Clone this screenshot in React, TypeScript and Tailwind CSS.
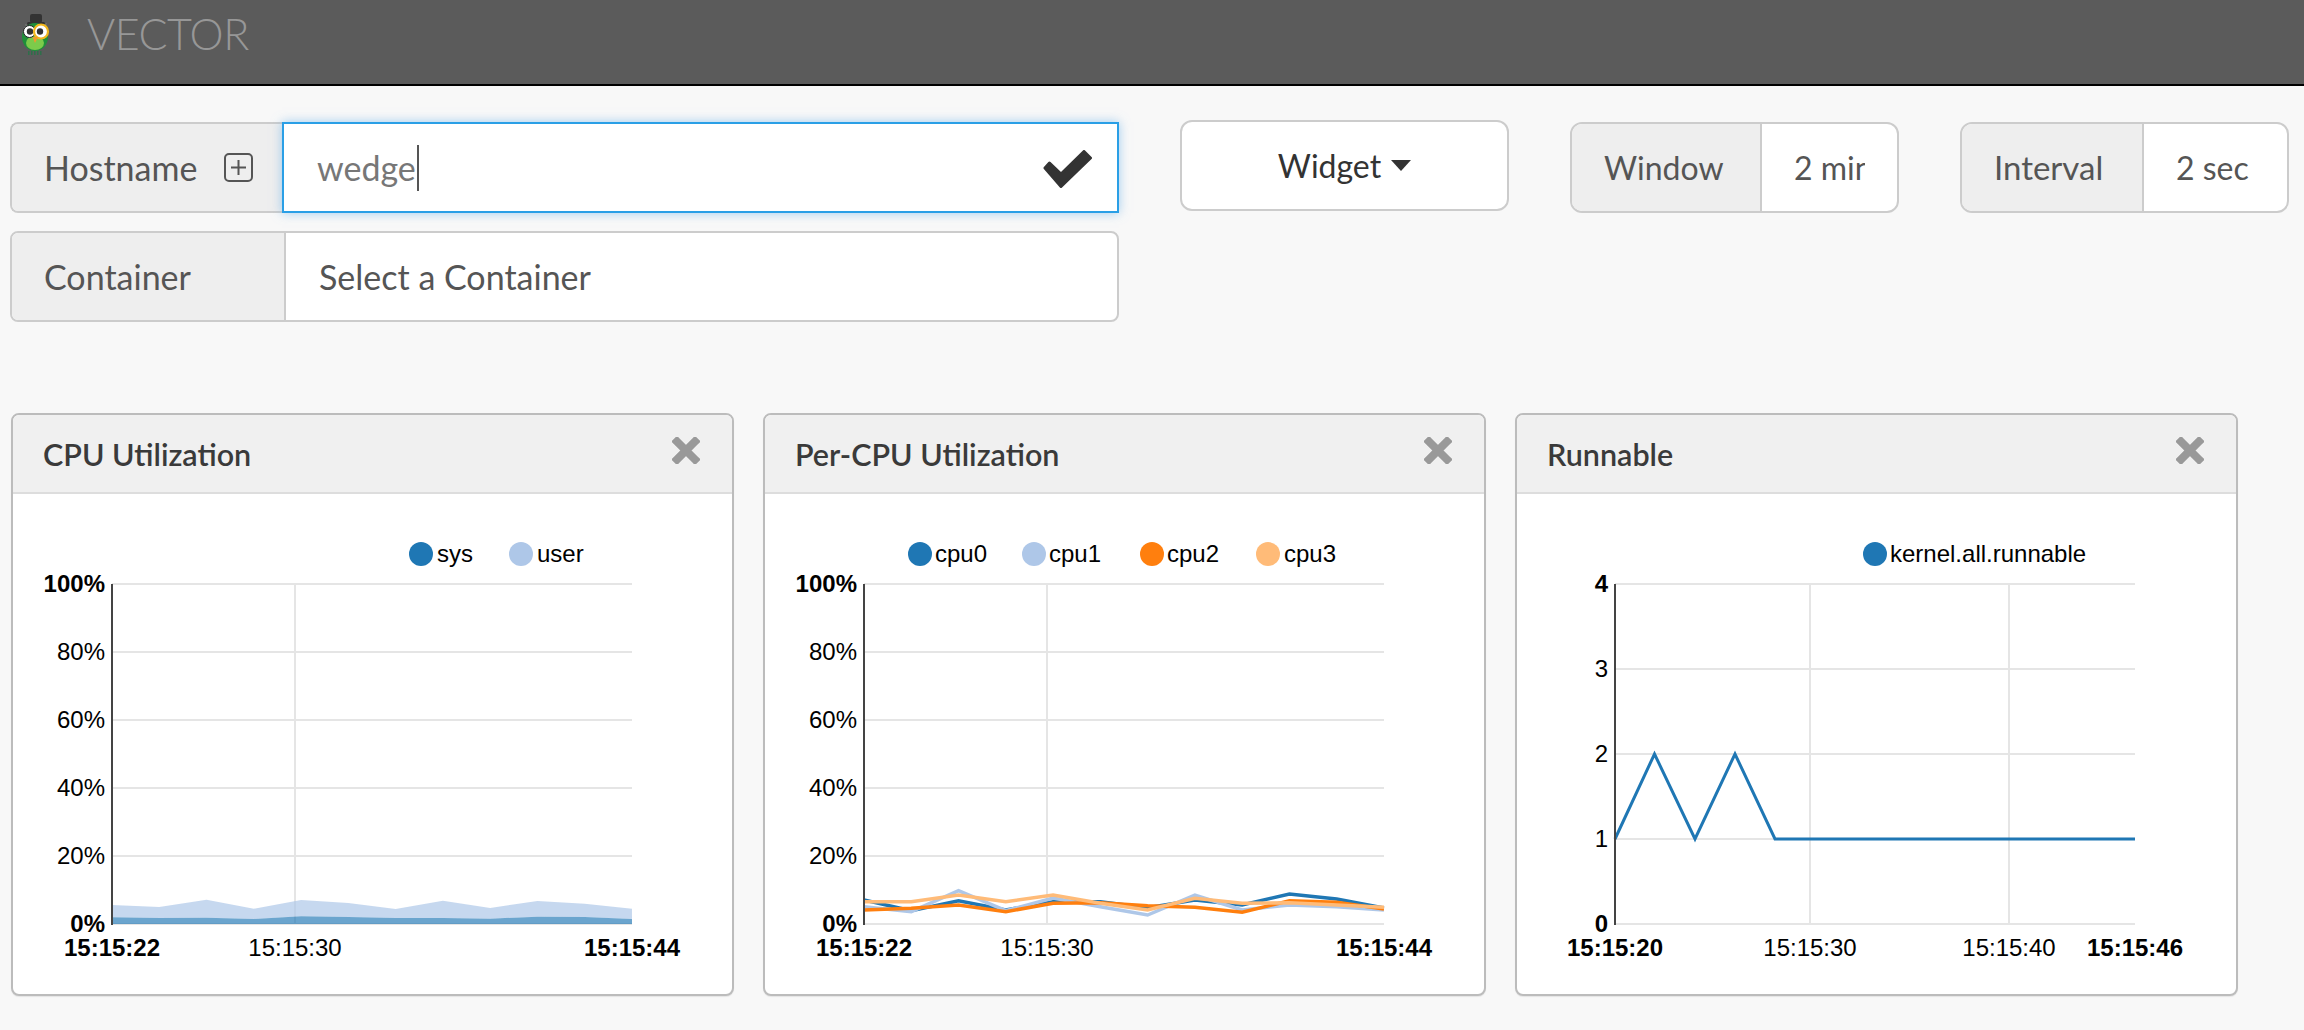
import React from "react";

const sans = "font-['Lato','Noto_Sans',sans-serif]";

function Owl() {
  return (
    <svg width="32" height="42" viewBox="0 0 32 42" className="block">
      <path d="M6 11 L12 13 L22 13 L28 10 L25 17 L8 17 Z" fill="#777" />
      <rect x="11" y="1" width="12" height="9" rx="2" fill="#333" />
      <rect x="8" y="9" width="18" height="3" rx="1.5" fill="#333" />
      <ellipse cx="16" cy="24" rx="13" ry="14" fill="#1f8f3a" />
      <ellipse cx="16" cy="30" rx="9" ry="7" fill="#7ccb4b" />
      <circle cx="10.5" cy="18.5" r="6" fill="#fff" stroke="#222" strokeWidth="1" />
      <circle cx="11" cy="18.5" r="3.2" fill="#333" />
      <circle cx="22" cy="18.5" r="7" fill="#fff" stroke="#f2b61c" strokeWidth="2.2" />
      <circle cx="21" cy="18.5" r="3.2" fill="#333" />
      <path d="M13.5 24 L19 24 L16 30 Z" fill="#f09a2c" />
      <path d="M9 38h1.5v4H9zM12 38h1.5v4H12zM15 38h1.5v4H15zM18 38h1.5v4H18zM21 38h1.5v4H21z" fill="#2f6f4a" />
    </svg>
  );
}

function Label({ children, w, extra = "" }: { children: React.ReactNode; w: string; extra?: string }) {
  return <div className={`flex items-center shrink-0 h-full bg-[#eeeeee] text-[#555555] ${w} ${extra}`}>{children}</div>;
}

function CloseX() {
  return (
    <svg width="28" height="27" viewBox="0 0 28 27" className="block">
      <path d="M5 4.5 L23 22.5 M23 4.5 L5 22.5" stroke="#999999" strokeWidth="8" strokeLinecap="square" />
    </svg>
  );
}

type Pt = [number, number];
const pts = (p: Pt[]) => p.map((q) => q.join(",")).join(" ");

function Axis({
  x0,
  x1,
  ticks,
  ylabels,
  xlabels,
  legend,
  children,
  vbLeft,
}: {
  x0: number;
  x1: number;
  ticks: number[];
  ylabels: { y: number; t: string; b?: boolean }[];
  xlabels: { x: number; t: string; b?: boolean }[];
  legend: { cx: number; tx: number; c: string; t: string }[];
  children: React.ReactNode;
  vbLeft: number;
}) {
  return (
    <svg
      width="718"
      height="499"
      viewBox={`${vbLeft} 494 718 499`}
      className="block"
      fontFamily="'Liberation Sans', Arial, sans-serif"
      fontSize="24"
      fill="#000"
    >
      {legend.map((l) => (
        <g key={l.t}>
          <ellipse cx={l.cx} cy={554} rx={12} ry={12} fill={l.c} />
          <text x={l.tx} y={562}>{l.t}</text>
        </g>
      ))}
      {ylabels.map((l) => (
        <line key={l.y} x1={x0} x2={x1} y1={l.y} y2={l.y} stroke="#e5e5e5" strokeWidth="2" />
      ))}
      {ticks.map((t) => (
        <line key={t} x1={t} x2={t} y1={584} y2={924} stroke="#e5e5e5" strokeWidth="2" />
      ))}
      {children}
      <line x1={x0} x2={x0} y1={584} y2={925} stroke="#444" strokeWidth="2" />
      {ylabels.map((l) => (
        <text key={l.t} x={x0 - 7} y={l.y + 8} textAnchor="end" fontWeight={l.b ? 700 : 400}>{l.t}</text>
      ))}
      {xlabels.map((l) => (
        <text key={l.t} x={l.x} y={956} textAnchor="middle" fontWeight={l.b ? 700 : 400}>{l.t}</text>
      ))}
    </svg>
  );
}

const pct = [
  { y: 584, t: "100%", b: true },
  { y: 652, t: "80%" },
  { y: 720, t: "60%" },
  { y: 788, t: "40%" },
  { y: 856, t: "20%" },
  { y: 924, t: "0%", b: true },
];

function Panel({ title, children }: { title: string; children: React.ReactNode }) {
  return (
    <div className="w-[723px] h-[583px] shrink-0 border-2 border-[#bcbcbc] rounded-[8px] bg-white overflow-hidden shadow-[0_1px_1px_rgba(0,0,0,0.08)]">
      <div className="h-[79px] bg-[#f0f0f0] border-b-2 border-[#dddddd] flex justify-between pl-[30px] pr-[32px] pt-[22px]">
        <span className={`${sans} -mt-[3px] text-[30.5px] leading-[40px] font-semibold text-[#3a3a3a]`}>{title}</span>
        <CloseX />
      </div>
      {children}
    </div>
  );
}

const X = (x0: number, vals: number[]): Pt[] => vals.map((v, i) => [x0 + i * 47.27, v]);

function CpuChart() {
  const light = X(112, [905, 907, 899.7, 908.7, 900, 903, 909, 900.7, 908, 901, 903.7, 908.7]);
  const dark = X(112, [917.3, 918, 917.7, 919, 916.3, 917, 918, 918, 918.7, 916.7, 917, 919]);
  const rev = [...dark].reverse();
  return (
    <Axis
      vbLeft={13}
      x0={112}
      x1={632}
      ticks={[295]}
      ylabels={pct}
      xlabels={[
        { x: 112, t: "15:15:22", b: true },
        { x: 295, t: "15:15:30" },
        { x: 632, t: "15:15:44", b: true },
      ]}
      legend={[
        { cx: 421, tx: 437, c: "#1f77b4", t: "sys" },
        { cx: 521, tx: 537, c: "#aec7e8", t: "user" },
      ]}
    >
      <polygon points={pts([...light, ...rev])} fill="#aec7e8" opacity="0.7" />
      <polygon points={pts([...dark, [632, 924], [112, 924]])} fill="#1f77b4" opacity="0.66" />
    </Axis>
  );
}

function PerCpuChart() {
  const lines: [string, number[]][] = [
    ["#1f77b4", [900, 910.7, 900.7, 910, 901.7, 901.7, 907.7, 900, 905, 894, 899, 908]],
    ["#aec7e8", [906.7, 911.7, 890.7, 910.7, 898, 906.7, 915, 895, 910, 905, 906.7, 910]],
    ["#ff7f0e", [910, 908.3, 905, 911.7, 903.3, 902.7, 905.7, 907.3, 912.3, 900.7, 902.3, 909]],
    ["#ffbb78", [901.7, 901.7, 895, 901.7, 895, 903.3, 910, 898.3, 903.3, 902.7, 905, 907.3]],
  ];
  return (
    <Axis
      vbLeft={765}
      x0={864}
      x1={1384}
      ticks={[1047]}
      ylabels={pct}
      xlabels={[
        { x: 864, t: "15:15:22", b: true },
        { x: 1047, t: "15:15:30" },
        { x: 1384, t: "15:15:44", b: true },
      ]}
      legend={[
        { cx: 920, tx: 935, c: "#1f77b4", t: "cpu0" },
        { cx: 1034, tx: 1049, c: "#aec7e8", t: "cpu1" },
        { cx: 1152, tx: 1167, c: "#ff7f0e", t: "cpu2" },
        { cx: 1268, tx: 1284, c: "#ffbb78", t: "cpu3" },
      ]}
    >
      {lines.map(([c, v]) => (
        <polyline key={c} points={pts(X(864, v))} fill="none" stroke={c} strokeWidth="3.5" />
      ))}
    </Axis>
  );
}

function RunnableChart() {
  return (
    <Axis
      vbLeft={1518}
      x0={1616}
      x1={2136}
      ticks={[1811, 2010]}
      ylabels={[
        { y: 584, t: "4", b: true },
        { y: 669, t: "3" },
        { y: 754, t: "2" },
        { y: 839, t: "1" },
        { y: 924, t: "0", b: true },
      ]}
      xlabels={[
        { x: 1616, t: "15:15:20", b: true },
        { x: 1811, t: "15:15:30" },
        { x: 2010, t: "15:15:40" },
        { x: 2136, t: "15:15:46", b: true },
      ]}
      legend={[{ cx: 1876, tx: 1891, c: "#1f77b4", t: "kernel.all.runnable" }]}
    >
      <polyline
        points={pts([[1616, 839], [1655.5, 754], [1696, 839], [1736, 754], [1776, 839], [2136, 839]])}
        fill="none"
        stroke="#1f77b4"
        strokeWidth="3"
      />
    </Axis>
  );
}

export default function App() {
  return (
    <div className={`w-[2304px] h-[1030px] overflow-hidden bg-[#f8f8f8] ${sans} text-[32px]`}>
      <header className="h-[86px] bg-[#5b5b5b] border-b-2 border-black flex items-start">
        <div className="ml-[19px] mt-[13px]"><Owl /></div>
        <span className="ml-[36px] mt-[6px] text-[43px] tracking-[-0.5px] leading-[56px] font-light text-[#979797]">VECTOR</span>
      </header>

      <div className="flex items-start pl-[10px] pt-[36px]">
        <div className="flex flex-col gap-[18px] w-[1109px]">
          <div className="flex h-[91px]">
            <div className="flex h-full border-2 border-[#cccccc] border-r-0 rounded-l-[8px] overflow-hidden">
              <Label w="w-[270px]" extra="pl-[32px] justify-between pr-[29px] text-[34px]">
                <span>Hostname</span>
                <span className="w-[29px] h-[29px] border-2 border-[#555555] rounded-[5px] flex items-center justify-center">
                  <svg width="17" height="17" viewBox="0 0 17 17"><path d="M8.5 1v15M1 8.5h15" stroke="#555555" strokeWidth="2" /></svg>
                </span>
              </Label>
            </div>
            <div className="flex-1 flex items-center justify-between bg-white border-2 border-[#2a9fe6] shadow-[0_0_10px_rgba(102,175,233,0.6)] pl-[33px] pr-[24px] relative z-10">
              <span className="flex items-center text-[#777777] text-[34px]">
                wedge
                <span className="w-[2px] h-[46px] bg-[#555555] ml-[1px]" />
              </span>
              <svg width="50" height="40" viewBox="0 0 50 40" className="block mt-[4px]">
                <polygon
                  points="2,18 6.5,13 18,24 41,1.5 47.5,8 18,36.5"
                  fill="#333333"
                  stroke="#333333"
                  strokeWidth="3"
                  strokeLinejoin="round"
                />
              </svg>
            </div>
          </div>
          <div className="flex h-[91px] border-2 border-[#cccccc] rounded-[8px] overflow-hidden bg-white">
            <Label w="w-[274px]" extra="pl-[32px] border-r-2 border-[#cccccc] text-[34px]">Container</Label>
            <div className="flex-1 flex items-center pl-[33px] text-[#555555] text-[34px]">Select a Container</div>
          </div>
        </div>

        <button className="ml-[61px] -mt-[2px] w-[329px] h-[91px] border-2 border-[#cccccc] rounded-[12px] bg-white text-[#333333] flex items-center justify-center gap-[10px]">
          Widget
          <span className="w-0 h-0 border-l-[10px] border-r-[10px] border-t-[11px] border-l-transparent border-r-transparent border-t-[#333333]" />
        </button>

        <div className="ml-[61px] w-[329px] h-[91px] flex border-2 border-[#cccccc] rounded-[12px] overflow-hidden bg-white">
          <Label w="w-[190px]" extra="pl-[32px] border-r-2 border-[#cccccc]">Window</Label>
          <div className="w-[71px] ml-[32px] overflow-hidden whitespace-nowrap flex items-center text-[#555555]">2 min</div>
        </div>

        <div className="ml-[61px] w-[329px] h-[91px] flex border-2 border-[#cccccc] rounded-[12px] overflow-hidden bg-white">
          <Label w="w-[182px]" extra="pl-[32px] border-r-2 border-[#cccccc] text-[33px]">Interval</Label>
          <div className="pl-[32px] flex items-center text-[#555555]">2 sec</div>
        </div>
      </div>

      <div className="flex gap-[29px] pl-[11px] pt-[91px]">
        <Panel title="CPU Utilization"><CpuChart /></Panel>
        <Panel title="Per-CPU Utilization"><PerCpuChart /></Panel>
        <Panel title="Runnable"><RunnableChart /></Panel>
      </div>
    </div>
  );
}
